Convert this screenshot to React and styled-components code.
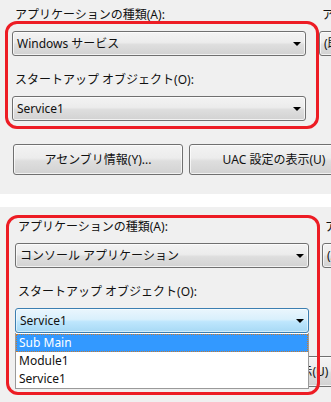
import React from "react";
import styled, { createGlobalStyle, css } from "styled-components";

const Global = createGlobalStyle`
  html, body { margin: 0; padding: 0; background: #ffffff; }
  body { width: 331px; height: 402px; overflow: hidden; font-family: "Noto Sans", "Noto Sans CJK JP", sans-serif; }
  #root { width: 331px; }
`;

const Page = styled.div`
  display: flex;
  flex-direction: column;
  width: 331px;
`;

const Panel = styled.div`
  position: relative;
  background: #f0f0f0;
  height: ${(p) => p.$h}px;
  overflow: hidden;
  padding: ${(p) => p.$top}px 0 0 ${(p) => p.$left}px;
  box-sizing: border-box;
`;

const Strip = styled.div`
  height: 13px;
  background: #ffffff;
`;

const Columns = styled.div`
  display: flex;
  gap: 13px;
  width: 700px;
`;

const Column = styled.div`
  display: flex;
  flex-direction: column;
  width: 294px;
  flex: none;
`;

const Label = styled.div`
  font-size: 12px;
  line-height: 16px;
  height: 16px;
  color: #111;
  padding-left: 3px;
  white-space: nowrap;
  margin-top: ${(p) => p.$mt || 0}px;
  margin-bottom: 8px;
`;

const chrome = css`
  box-sizing: border-box;
  border: 1px solid #707070;
  border-radius: 3px;
  background: linear-gradient(to bottom, #f3f3f3 0%, #ececec 45%, #dedede 55%, #d2d2d2 100%);
  box-shadow: inset 0 0 0 1px rgba(255, 255, 255, 0.7);
  font-size: 12px;
  color: #111;
  white-space: nowrap;
`;

const Combo = styled.div`
  ${chrome}
  height: 25px;
  display: flex;
  align-items: center;
  justify-content: space-between;
  padding: 0 4px 0 4px;
  ${(p) =>
    p.$focused &&
    css`
      border-color: #3c7fb1;
      background: linear-gradient(to bottom, #eaf6fd 0%, #d9f0fc 45%, #bee6fd 55%, #a7d9f5 100%);
      box-shadow: inset 0 0 0 1px rgba(255, 255, 255, 0.5);
    `}
`;

const ComboText = styled.span`
  line-height: 16px;
`;

const Arrow = styled.span`
  width: 0;
  height: 0;
  border-left: 4px solid transparent;
  border-right: 4px solid transparent;
  border-top: 4px solid #000;
  flex: none;
`;

const ComboWrap = styled.div`
  position: relative;
`;

const ListBox = styled.div`
  position: absolute;
  left: 0;
  right: 0;
  top: 100%;
  background: #fff;
  border: 1px solid #9a9a9a;
  border-top: none;
  z-index: 2;
  padding-top: 1px;
`;

const Item = styled.div`
  height: 18px;
  line-height: 18px;
  font-size: 12px;
  padding-left: 3px;
  box-sizing: border-box;
  color: #111;
  ${(p) =>
    p.$selected &&
    css`
      background: #3399ff;
      color: #fff;
      outline: 1px dotted #c97a2e;
      outline-offset: -1px;
    `}
`;

const Buttons = styled.div`
  display: flex;
  gap: 6px;
  margin-top: 23px;
  margin-left: 1px;
  width: 700px;
`;

const Button = styled.div`
  ${chrome}
  width: 170px;
  height: 31px;
  flex: none;
  display: flex;
  align-items: center;
  justify-content: center;
  line-height: 16px;
`;

const Highlight = styled.div`
  position: absolute;
  left: ${(p) => p.$x}px;
  top: ${(p) => p.$y}px;
  width: ${(p) => p.$w}px;
  height: ${(p) => p.$hh}px;
  box-sizing: border-box;
  border: 3px solid #ed1c24;
  border-radius: 12px;
  z-index: 3;
  pointer-events: none;
`;

function Dialog({ appType, open, h, top, left, ring }) {
  return (
    <Panel $h={h} $top={top} $left={left}>
      <Columns>
        <Column>
          <Label>アプリケーションの種類(A):</Label>
          <Combo>
            <ComboText>{appType}</ComboText>
            <Arrow />
          </Combo>
          <Label $mt={16}>スタートアップ オブジェクト(O):</Label>
          <ComboWrap>
            <Combo $focused={open}>
              <ComboText>Service1</ComboText>
              <Arrow />
            </Combo>
            {open && (
              <ListBox>
                <Item $selected>Sub Main</Item>
                <Item>Module1</Item>
                <Item>Service1</Item>
              </ListBox>
            )}
          </ComboWrap>
        </Column>
        <Column>
          <Label>アイコン(I):</Label>
          <Combo>
            <ComboText>(既定のアイコン)</ComboText>
            <Arrow />
          </Combo>
        </Column>
      </Columns>
      <Buttons>
        <Button>アセンブリ情報(Y)...</Button>
        <Button>UAC 設定の表示(U)</Button>
      </Buttons>
      <Highlight $x={ring.x} $y={ring.y} $w={ring.w} $hh={ring.h} />
    </Panel>
  );
}

export default function App() {
  return (
    <Page>
      <Global />
      <Dialog
        appType="Windows サービス"
        h={194}
        top={7}
        left={12}
        ring={{ x: 5, y: 21, w: 314, h: 108 }}
      />
      <Strip />
      <Dialog
        appType="コンソール アプリケーション"
        open
        h={195}
        top={12}
        left={15}
        ring={{ x: 6, y: 8, w: 314, h: 180 }}
      />
    </Page>
  );
}
